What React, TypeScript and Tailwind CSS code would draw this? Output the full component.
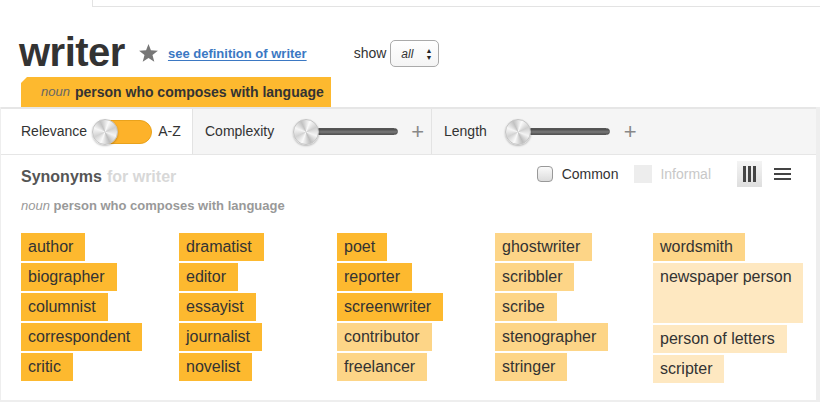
import React from 'react'

type Tone = 'hi' | 'mid' | 'lo'

interface Chip {
  word: string
  tone: Tone
  tall?: boolean
}

const COLUMNS: Chip[][] = [
  [
    { word: 'author', tone: 'hi' },
    { word: 'biographer', tone: 'hi' },
    { word: 'columnist', tone: 'hi' },
    { word: 'correspondent', tone: 'hi' },
    { word: 'critic', tone: 'hi' },
  ],
  [
    { word: 'dramatist', tone: 'hi' },
    { word: 'editor', tone: 'hi' },
    { word: 'essayist', tone: 'hi' },
    { word: 'journalist', tone: 'hi' },
    { word: 'novelist', tone: 'hi' },
  ],
  [
    { word: 'poet', tone: 'hi' },
    { word: 'reporter', tone: 'hi' },
    { word: 'screenwriter', tone: 'hi' },
    { word: 'contributor', tone: 'mid' },
    { word: 'freelancer', tone: 'mid' },
  ],
  [
    { word: 'ghostwriter', tone: 'mid' },
    { word: 'scribbler', tone: 'mid' },
    { word: 'scribe', tone: 'mid' },
    { word: 'stenographer', tone: 'mid' },
    { word: 'stringer', tone: 'mid' },
  ],
  [
    { word: 'wordsmith', tone: 'mid' },
    { word: 'newspaper person', tone: 'lo', tall: true },
    { word: 'person of letters', tone: 'lo' },
    { word: 'scripter', tone: 'lo' },
  ],
]

const TONE: Record<Tone, string> = {
  hi: 'bg-[#fdb92f]',
  mid: 'bg-[#fdd587]',
  lo: 'bg-[#fee8c1]',
}

function Knob() {
  return (
    <div className="relative z-10 w-[26px] h-[26px] rounded-full border border-[#c4c4c4] bg-[conic-gradient(from_20deg,#fafafa,#cfcfcf,#f4f4f4,#bdbdbd,#fafafa,#d2d2d2,#f6f6f6,#c2c2c2,#fafafa)] shadow-[0_1px_2px_rgba(0,0,0,0.25)] flex-shrink-0" />
  )
}

function Slider() {
  return (
    <div className="flex items-center">
      <Knob />
      <div className="-ml-[4px] w-[83px] h-[7px] rounded-full bg-[linear-gradient(#4a4a4a,#7a7a7a_60%,#555)] border border-[#555]" />
    </div>
  )
}

export default function App() {
  return (
    <div className="w-[820px] h-[404px] overflow-hidden bg-white text-[#333] font-['Liberation_Sans',Arial,sans-serif]">
      {/* top strip */}
      <div className="ml-[92px] h-[7px] border-l border-b border-[#e3e3e3]" />

      {/* headword */}
      <div className="flex items-center pl-[19px] pt-[23px] h-[70px]">
        <h1 className="text-[40px] font-bold leading-none tracking-[-0.5px] text-[#333] -mt-[4px]">writer</h1>
        <svg className="ml-[14px] -mt-[2px]" width="19" height="18" viewBox="0 0 24 23">
          <path d="M12 0l3.1 8.1 8.9.5-6.9 5.6 2.3 8.6L12 18l-7.4 4.8 2.3-8.6L0 8.6l8.9-.5z" fill="#777" />
        </svg>
        <a className="ml-[10px] text-[13px] font-bold text-[#3b78c3] underline underline-offset-2">
          see definition of writer
        </a>
        <span className="ml-[47px] text-[14px]">show</span>
        <div className="ml-[4px] w-[49px] h-[27px] rounded-[5px] border border-[#aaa] bg-gradient-to-b from-white to-[#f4f4f4] flex items-center justify-between pl-[10px] pr-[6px]">
          <span className="text-[12px] italic">all</span>
          <span className="flex flex-col text-[7px] leading-[7px] text-[#222]">
            <span>▲</span>
            <span>▼</span>
          </span>
        </div>
      </div>

      {/* sense tab */}
      <div className="ml-[21px] w-[310px] h-[30px] bg-[#fdb92f] [clip-path:polygon(6px_0,100%_0,100%_100%,0_100%,0_6px)] flex items-center pl-[20px] gap-[5px]">
        <span className="text-[13px] italic text-[#666]">noun</span>
        <span className="text-[14px] font-bold text-[#333]">person who composes with language</span>
      </div>

      {/* results frame */}
      <div className="border-l border-r-[4px] border-b-[2px] border-[#eeeeee]">
        {/* toolbar */}
        <div className="flex h-[48px] border-t-2 border-b border-[#e6e6e6] text-[14px] text-[#333]">
          <div className="w-[191px] bg-white flex items-center pl-[20px]">
            <span>Relevance</span>
            <div className="ml-[5px] flex items-center">
              <Knob />
              <div className="-ml-[22px] w-[56px] h-[24px] rounded-full bg-[#fdb22a] border border-[#e9a21c]" />
            </div>
            <span className="ml-[6px]">A-Z</span>
          </div>
          <div className="w-[239px] bg-[#f5f5f5] border-l border-[#e3e3e3] flex items-center pl-[12px]">
            <span>Complexity</span>
            <div className="ml-[19px]">
              <Slider />
            </div>
            <span className="ml-[13px] text-[22px] font-light text-[#888] leading-none">+</span>
          </div>
          <div className="flex-1 bg-[#f5f5f5] border-l border-[#e3e3e3] flex items-center pl-[12px]">
            <span>Length</span>
            <div className="ml-[18px]">
              <Slider />
            </div>
            <span className="ml-[14px] text-[22px] font-light text-[#888] leading-none">+</span>
          </div>
        </div>

        {/* synonyms */}
        <div className="h-[245px] pl-[20px] pt-[11px] relative">
          <div className="flex items-center h-[22px]">
            <span className="text-[16px] font-bold text-[#555]">Synonyms</span>
            <span className="ml-[5px] text-[16px] font-bold text-[#d8d8d8]">for writer</span>
            <div className="ml-auto flex items-center mr-[25px] -mt-[6px]">
              <div className="w-[16px] h-[16px] rounded-[4px] border border-[#999] bg-gradient-to-b from-[#fafafa] to-[#dcdcdc]" />
              <span className="ml-[9px] text-[14px] text-[#333]">Common</span>
              <div className="ml-[16px] w-[18px] h-[18px] bg-[#ededed]" />
              <span className="ml-[8px] text-[14px] text-[#c8c8c8]">Informal</span>
              <div className="ml-[26px] w-[25px] h-[26px] bg-gradient-to-b from-[#f4f4f4] to-[#dedede] flex items-center justify-center gap-[2px]">
                <span className="w-[3px] h-[16px] bg-[#444]" />
                <span className="w-[3px] h-[16px] bg-[#444]" />
                <span className="w-[3px] h-[16px] bg-[#444]" />
              </div>
              <div className="ml-[12px] w-[17px] flex flex-col gap-[3px]">
                <span className="h-[2px] bg-[#444]" />
                <span className="h-[2px] bg-[#444]" />
                <span className="h-[2px] bg-[#444]" />
              </div>
            </div>
          </div>
          <p className="mt-[8px] text-[13px] text-[#999]">
            <span className="italic">noun</span> <span className="font-bold">person who composes with language</span>
          </p>

          <div className="mt-[17px] grid grid-cols-[158px_158px_158px_158px_1fr]">
            {COLUMNS.map((col, i) => (
              <div key={i} className="flex flex-col items-start gap-[2px]">
                {col.map(c => (
                  <div
                    key={c.word}
                    className={`${TONE[c.tone]} ${c.tall ? 'h-[60px] w-[150px] items-start pt-[3px] pr-0' : 'h-[28px] items-center pr-[12px]'} flex whitespace-nowrap pl-[7px] text-[16px] text-[#333] leading-[22px]`}
                  >
                    {c.word}
                  </div>
                ))}
              </div>
            ))}
          </div>
        </div>
      </div>
    </div>
  )
}
